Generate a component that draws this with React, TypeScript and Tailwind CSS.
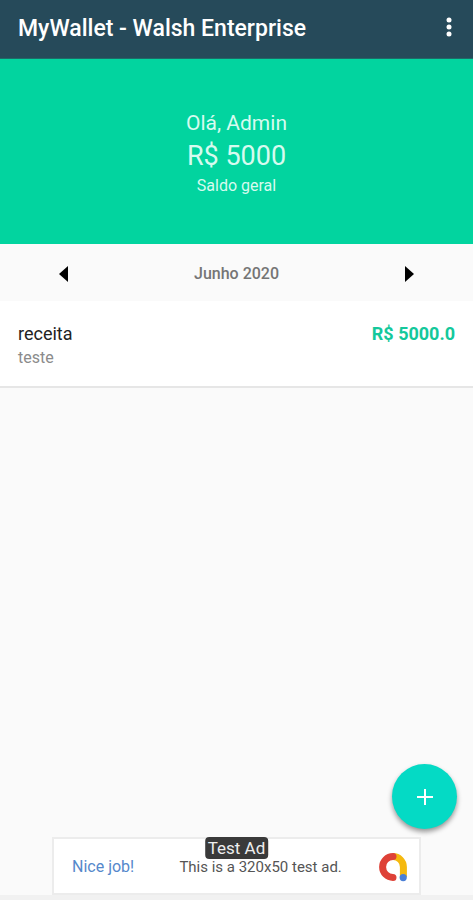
const entries = [{ title: 'receita', description: 'teste', amount: 'R$ 5000.0' }];

function Header() {
  return (
    <header className="flex h-[59px] shrink-0 items-center justify-between border-b border-[#1f6a68] bg-[#264a5a] pl-[18px] pr-2">
      <h1 className="text-[23px] leading-7 font-medium text-white">MyWallet - Walsh Enterprise</h1>
      <button type="button" aria-label="Mais opções" className="flex h-10 w-8 items-center justify-center pb-1">
        <svg viewBox="0 0 6 20" className="h-5 w-[6px] fill-white" aria-hidden="true">
          <circle cx="3" cy="3" r="2.5" />
          <circle cx="3" cy="10" r="2.5" />
          <circle cx="3" cy="17" r="2.5" />
        </svg>
      </button>
    </header>
  );
}

function Balance() {
  return (
    <section className="flex h-[185px] shrink-0 flex-col items-center justify-center bg-[#02d49f] pt-[3px] text-[#d6fbef]">
      <p className="text-[21px] leading-7">Olá, Admin</p>
      <p className="text-[27px] leading-[38px]">R$ 5000</p>
      <p className="text-base leading-[22px]">Saldo geral</p>
    </section>
  );
}

function MonthPicker() {
  return (
    <nav className="flex h-[57px] shrink-0 items-center justify-between px-[47px] pt-0.5">
      <button type="button" aria-label="Mês anterior" className="flex size-8 items-center justify-center">
        <svg viewBox="0 0 9 16" className="h-4 w-[9px] fill-black" aria-hidden="true">
          <path d="M9 0v16L0 8z" />
        </svg>
      </button>
      <span className="text-base leading-6 font-medium text-[#757575]">Junho 2020</span>
      <button type="button" aria-label="Próximo mês" className="flex size-8 items-center justify-center">
        <svg viewBox="0 0 9 16" className="h-4 w-[9px] fill-black" aria-hidden="true">
          <path d="M0 0v16l9-8z" />
        </svg>
      </button>
    </nav>
  );
}

function AdMobLogo() {
  return (
    <svg viewBox="0 0 28 30" className="h-[30px] w-7" fill="none" strokeWidth="7" aria-hidden="true">
      <path d="M14 4.6A10.4 10.4 0 0 1 24.4 15V25" stroke="#f5b90f" />
      <path d="M14 4.6A10.4 10.4 0 0 0 14 25.4" stroke="#de4137" strokeLinecap="round" />
      <circle cx="24.2" cy="25.6" r="3.6" fill="#4a7fd6" />
    </svg>
  );
}

function AdBanner() {
  return (
    <footer className="flex shrink-0 justify-center border-b-[5px] border-[#f1f1f1] px-[52px]">
      <div className="relative flex h-[58px] w-full max-w-[370px] items-center justify-between border-2 border-[#ececec] bg-white pt-0.5 pr-3 pl-[18px]">
        <span className="text-base leading-4 text-[#5588cb]">Nice job!</span>
        <span className="ml-2 text-[15px] leading-4 text-[#555555]">This is a 320x50 test ad.</span>
        <AdMobLogo />
        <span className="absolute -top-0.5 left-1/2 -translate-x-1/2 rounded-sm bg-[#3a3a3a] px-[3px] text-[17px] leading-[22px] whitespace-nowrap text-[#eeeeee]">
          Test Ad
        </span>
      </div>
    </footer>
  );
}

export default function App() {
  return (
    <div className="flex min-h-screen flex-col bg-[#fafafa] font-[Roboto,sans-serif]">
      <Header />
      <Balance />
      <MonthPicker />
      <main className="flex grow flex-col justify-between">
        <ul>
          {entries.map((entry) => (
            <li key={entry.title} className="flex h-[87px] items-start justify-between border-b-2 border-[#e6e6e6] bg-white px-[18px] pt-[21px]">
              <div>
                <p className="text-lg leading-6 text-[#222222]">{entry.title}</p>
                <p className="text-base leading-6 text-[#8b8b8b]">{entry.description}</p>
              </div>
              <p className="text-lg leading-6 font-bold text-[#14c89b]">{entry.amount}</p>
            </li>
          ))}
        </ul>
        <button
          type="button"
          aria-label="Adicionar"
          className="mr-4 mb-2 flex size-[65px] items-center justify-center self-end rounded-full bg-[#04dac5] shadow-[0_3px_5px_rgba(0,0,0,0.4)]"
        >
          <svg viewBox="0 0 16 16" className="size-4" stroke="white" strokeWidth="2" aria-hidden="true">
            <path d="M8 0v16M0 8h16" />
          </svg>
        </button>
      </main>
      <AdBanner />
    </div>
  );
}
